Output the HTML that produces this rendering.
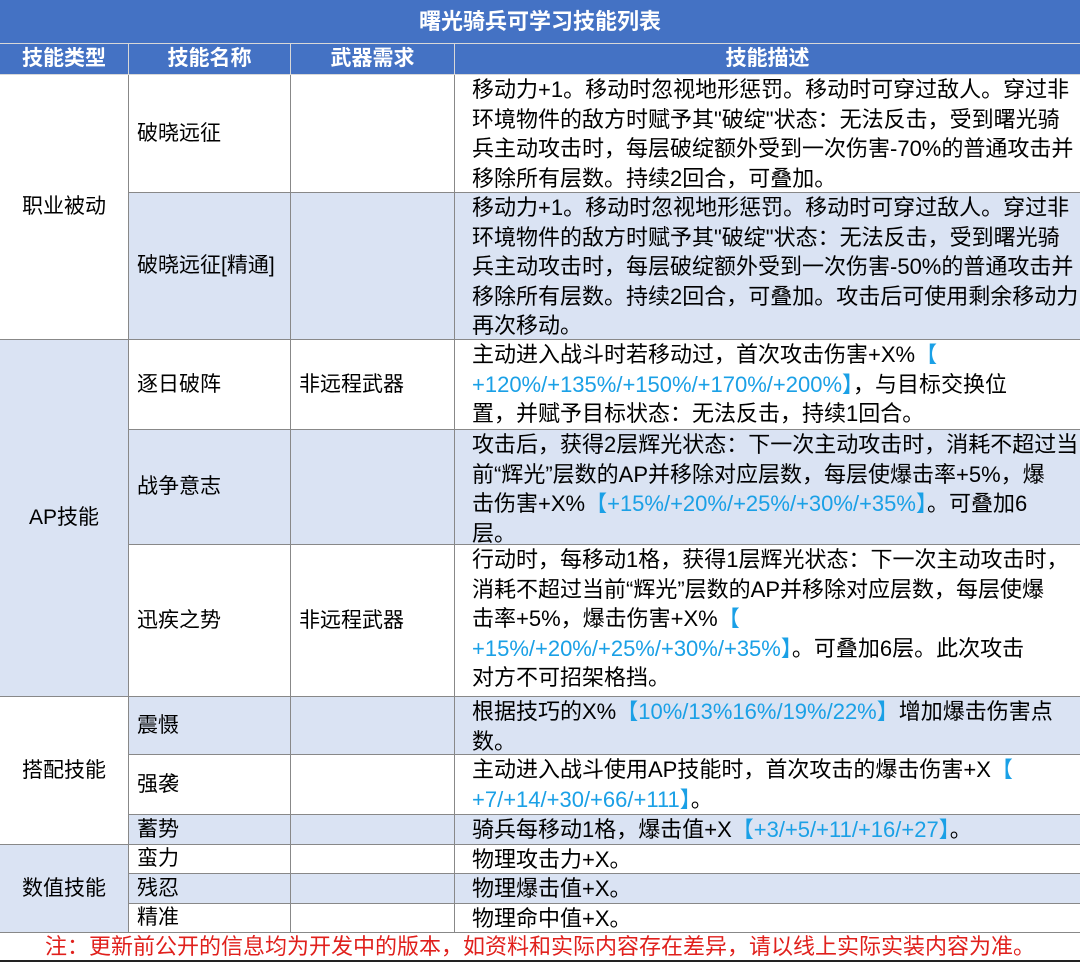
<!DOCTYPE html>
<html><head><meta charset="utf-8"><style>
body{margin:0;width:1080px;height:964px;background:#fff;position:relative;overflow:hidden;font-family:"Liberation Sans","Noto Sans CJK SC",sans-serif;color:#000}
.c{position:absolute;box-sizing:border-box;border-right:1px solid #888;border-bottom:1px solid #888;font-size:21px;line-height:29.5px;white-space:nowrap;overflow:hidden}
.b{background:#dae3f3}
.w{background:#fff}
.v{display:flex;align-items:center}
.ctr{justify-content:center}
.p{padding-left:8px}
.d{padding-left:17px;font-size:22px}
.h{background:#4472c4;color:#fff;font-weight:bold;font-size:21px;justify-content:center;border-color:#d8d8d8}
.k{color:#1aa0e6}
</style></head><body>
<div class="c h v" style="left:0;top:0;width:1080px;height:44px;font-size:22px;border-right:0">曙光骑兵可学习技能列表</div>
<div class="c h v" style="left:0;top:44px;width:129px;height:31px">技能类型</div>
<div class="c h v" style="left:129px;top:44px;width:162px;height:31px">技能名称</div>
<div class="c h v" style="left:291px;top:44px;width:164px;height:31px">武器需求</div>
<div class="c h v" style="left:455px;top:44px;width:625px;height:31px;border-right:0">技能描述</div>

<div class="c w v ctr" style="left:0;top:75px;width:129px;height:265px">职业被动</div>
<div class="c b v ctr" style="left:0;top:340px;width:129px;height:357px">AP技能</div>
<div class="c w v ctr" style="left:0;top:697px;width:129px;height:148px">搭配技能</div>
<div class="c b v ctr" style="left:0;top:845px;width:129px;height:88px">数值技能</div>

<div class="c w v p" style="left:129px;top:75px;width:162px;height:118px">破晓远征</div>
<div class="c w" style="left:291px;top:75px;width:164px;height:118px"></div>
<div class="c w d" style="left:455px;top:75px;width:625px;height:118px;border-right:0">移动力+1。移动时忽视地形惩罚。移动时可穿过敌人。穿过非<br>环境物件的敌方时赋予其"破绽"状态：无法反击，受到曙光骑<br>兵主动攻击时，每层破绽额外受到一次伤害-70%的普通攻击并<br>移除所有层数。持续2回合，可叠加。</div>

<div class="c b v p" style="left:129px;top:193px;width:162px;height:147px">破晓远征[精通]</div>
<div class="c b" style="left:291px;top:193px;width:164px;height:147px"></div>
<div class="c b d" style="left:455px;top:193px;width:625px;height:147px;border-right:0">移动力+1。移动时忽视地形惩罚。移动时可穿过敌人。穿过非<br>环境物件的敌方时赋予其"破绽"状态：无法反击，受到曙光骑<br>兵主动攻击时，每层破绽额外受到一次伤害-50%的普通攻击并<br>移除所有层数。持续2回合，可叠加。攻击后可使用剩余移动力<br>再次移动。</div>

<div class="c w v p" style="left:129px;top:340px;width:162px;height:90px">逐日破阵</div>
<div class="c w v p" style="left:291px;top:340px;width:164px;height:90px">非远程武器</div>
<div class="c w d" style="left:455px;top:340px;width:625px;height:90px;border-right:0">主动进入战斗时若移动过，首次攻击伤害+X%<span class="k">【<br>+120%/+135%/+150%/+170%/+200%】</span>，与目标交换位<br>置，并赋予目标状态：无法反击，持续1回合。</div>

<div class="c b v p" style="left:129px;top:430px;width:162px;height:115px">战争意志</div>
<div class="c b" style="left:291px;top:430px;width:164px;height:115px"></div>
<div class="c b d" style="left:455px;top:430px;width:625px;height:115px;border-right:0">攻击后，获得2层辉光状态：下一次主动攻击时，消耗不超过当<br>前“辉光”层数的AP并移除对应层数，每层使爆击率+5%，爆<br>击伤害+X%<span class="k">【+15%/+20%/+25%/+30%/+35%】</span>。可叠加6<br>层。</div>

<div class="c w v p" style="left:129px;top:545px;width:162px;height:152px">迅疾之势</div>
<div class="c w v p" style="left:291px;top:545px;width:164px;height:152px">非远程武器</div>
<div class="c w d" style="left:455px;top:545px;width:625px;height:152px;border-right:0">行动时，每移动1格，获得1层辉光状态：下一次主动攻击时，<br>消耗不超过当前“辉光”层数的AP并移除对应层数，每层使爆<br>击率+5%，爆击伤害+X%<span class="k">【<br>+15%/+20%/+25%/+30%/+35%】</span>。可叠加6层。此次攻击<br>对方不可招架格挡。</div>

<div class="c b v p" style="left:129px;top:697px;width:162px;height:58px">震慑</div>
<div class="c b" style="left:291px;top:697px;width:164px;height:58px"></div>
<div class="c b d" style="left:455px;top:697px;width:625px;height:58px;border-right:0">根据技巧的X%<span class="k">【10%/13%16%/19%/22%】</span>增加爆击伤害点<br>数。</div>

<div class="c w v p" style="left:129px;top:755px;width:162px;height:60px">强袭</div>
<div class="c w" style="left:291px;top:755px;width:164px;height:60px"></div>
<div class="c w d" style="left:455px;top:755px;width:625px;height:60px;border-right:0">主动进入战斗使用AP技能时，首次攻击的爆击伤害+X<span class="k">【<br>+7/+14/+30/+66/+111】</span>。</div>

<div class="c b v p" style="left:129px;top:815px;width:162px;height:30px">蓄势</div>
<div class="c b" style="left:291px;top:815px;width:164px;height:30px"></div>
<div class="c b d" style="left:455px;top:815px;width:625px;height:30px;border-right:0">骑兵每移动1格，爆击值+X<span class="k">【+3/+5/+11/+16/+27】</span>。</div>

<div class="c w v p" style="left:129px;top:845px;width:162px;height:29px">蛮力</div>
<div class="c w" style="left:291px;top:845px;width:164px;height:29px"></div>
<div class="c w d" style="left:455px;top:845px;width:625px;height:29px;border-right:0">物理攻击力+X。</div>

<div class="c b v p" style="left:129px;top:874px;width:162px;height:30px">残忍</div>
<div class="c b" style="left:291px;top:874px;width:164px;height:30px"></div>
<div class="c b d" style="left:455px;top:874px;width:625px;height:30px;border-right:0">物理爆击值+X。</div>

<div class="c w v p" style="left:129px;top:904px;width:162px;height:29px">精准</div>
<div class="c w" style="left:291px;top:904px;width:164px;height:29px"></div>
<div class="c w d" style="left:455px;top:904px;width:625px;height:29px;border-right:0">物理命中值+X。</div>

<div class="c v ctr" style="left:0;top:933px;width:1080px;height:29px;font-size:22px;color:#e0201c;border-right:0;border-bottom:2px solid #222">注：更新前公开的信息均为开发中的版本，如资料和实际内容存在差异，请以线上实际实装内容为准。</div>
</body></html>
